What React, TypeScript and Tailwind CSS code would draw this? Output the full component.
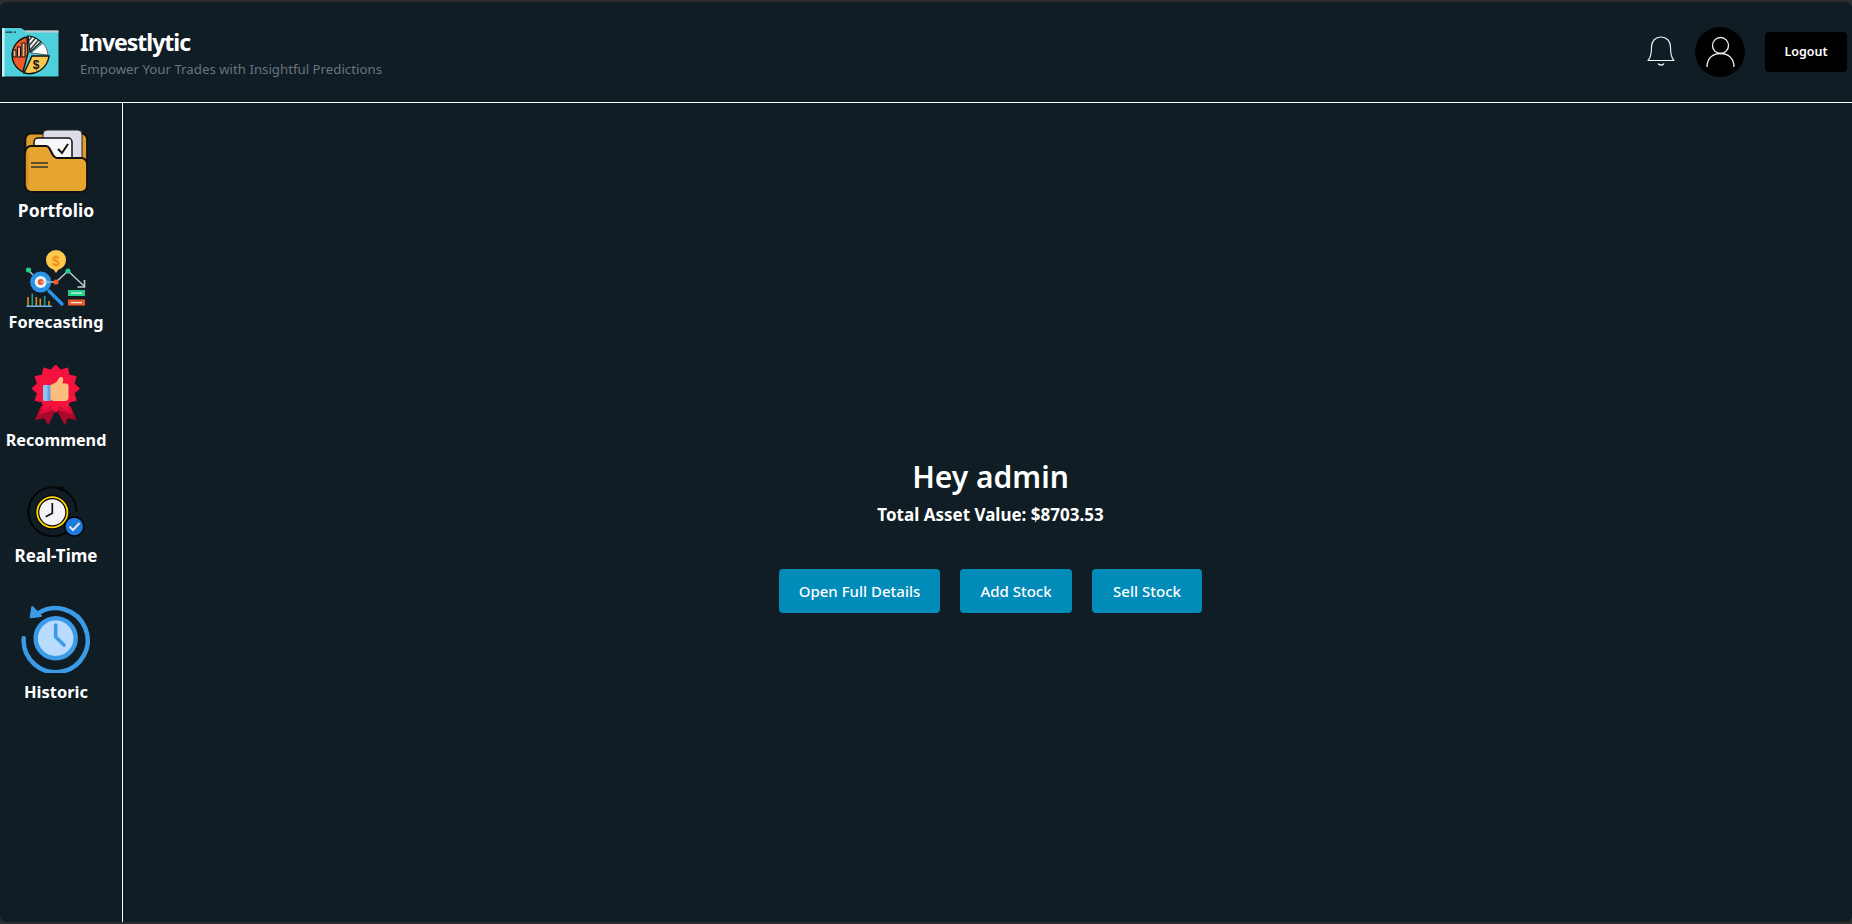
function starPoints(cx: number, cy: number, outer: number, inner: number, count: number) {
  const points: string[] = [];
  for (let i = 0; i < count * 2; i++) {
    const radius = i % 2 === 0 ? outer : inner;
    const angle = (Math.PI * i) / count - Math.PI / 2;
    points.push(`${cx + radius * Math.cos(angle)},${cy + radius * Math.sin(angle)}`);
  }
  return points.join(" ");
}

function LogoIcon() {
  return (
    <svg viewBox="0 0 60 52" className="h-[52px] w-[60px]">
      <defs>
        <clipPath id="hatch">
          <path d="M28 10 L30 26 L41 16 A20 20 0 0 0 28 10z" />
        </clipPath>
      </defs>
      <path d="M1.5 1.5 H21 L25 4 H58 a1 1 0 0 1 1 1 V50 a1 1 0 0 1 -1 1 H2.5 a1 1 0 0 1 -1 -1z" fill="#4dd0dc" stroke="#0b1215" strokeWidth="1" />
      <rect x="2" y="2" width="2.5" height="48.5" fill="#c5f1f5" />
      <rect x="25" y="4.5" width="33.5" height="2" fill="#c9c9c9" />
      <rect x="5.5" y="5.5" width="7" height="1.3" fill="#1d3a44" />
      <rect x="14" y="5.5" width="2" height="1.3" fill="#1d3a44" />
      <path d="M27 11 A18.5 18.5 0 0 0 23 46 L28 27z" fill="#ee5a2a" stroke="#111" strokeWidth="1.4" />
      <path d="M28 10 L30 26 L41 16 A20 20 0 0 0 28 10z" fill="#f2f2f2" stroke="#111" strokeWidth="1.2" />
      <g clipPath="url(#hatch)" stroke="#333" strokeWidth="1.4">
        <path d="M24 20 L36 6 M27 22 L39 8 M30 24 L42 10 M33 26 L45 12" />
      </g>
      <path d="M31 27 L43 17 A20 20 0 0 1 48 29z" fill="#fff" stroke="#111" strokeWidth="0.6" />
      <path d="M32 30 H49 A20 20 0 0 1 24 47z" fill="#f9c74f" stroke="#111" strokeWidth="1.4" />
      <rect x="13" y="24" width="3" height="7" fill="#f4b183" stroke="#111" strokeWidth="1" />
      <rect x="17.5" y="21" width="3" height="10" fill="#f4b183" stroke="#111" strokeWidth="1" />
      <rect x="22" y="17" width="3" height="14" fill="#f4b183" stroke="#111" strokeWidth="1" />
      <text x="36" y="43" fontSize="12" fontWeight="700" textAnchor="middle" fill="#111" fontFamily="Liberation Sans, sans-serif">$</text>
    </svg>
  );
}

function FolderIcon() {
  return (
    <svg viewBox="0 0 64 64" className="h-[64px] w-[64px]">
      <rect x="1.2" y="4.5" width="62" height="56" rx="6" fill="#dc9d2a" stroke="#111" strokeWidth="2.2" />
      <path d="M19 5 a4 4 0 0 1 4 -4 h31 a4 4 0 0 1 4 4 v28 h-39z" fill="#dcdce8" stroke="#222" strokeWidth="1" />
      <path d="M10 13 a4 4 0 0 1 4 -4 h30 a4 4 0 0 1 4 4 v20 h-38z" fill="#f7f7fa" stroke="#111" strokeWidth="1.5" />
      <path d="M34 20 l4 4 l6 -9" fill="none" stroke="#111" strokeWidth="2" />
      <path d="M1.2 23 a6 6 0 0 1 6 -6 h15 c5 0 5 12 11 12 h24 a6 6 0 0 1 6 6 v22 a6 6 0 0 1 -6 6 H7.2 a6 6 0 0 1 -6 -6z" fill="#e5a52f" stroke="#111" strokeWidth="2.2" />
      <path d="M7 34 h17 M7 38 h17" stroke="#333" strokeWidth="1.5" />
      <rect x="1.8" y="24" width="3" height="33" fill="#d8952a" />
    </svg>
  );
}

function ForecastIcon() {
  return (
    <svg viewBox="0 0 60 57" className="h-[57px] w-[60px]">
      <circle cx="30" cy="10" r="10" fill="#ffc94d" />
      <path d="M26.5 18 L30 23 L33.5 18z" fill="#ffc94d" />
      <text x="30" y="15.5" fontSize="14" fontWeight="700" textAnchor="middle" fill="#f28c1e" fontFamily="Liberation Sans, sans-serif">$</text>
      <path d="M2.3 20 L7 25 M20 32 H30 L42 21 L58 36" fill="none" stroke="#c3cbcf" strokeWidth="1.3" />
      <path d="M58.5 30 V37 H51.5" fill="none" stroke="#c3cbcf" strokeWidth="1.6" />
      <circle cx="2.5" cy="20" r="2.6" fill="#1fd286" />
      <circle cx="42" cy="21" r="2.6" fill="#1fd286" />
      <circle cx="30" cy="32" r="2.6" fill="#ee5a2a" />
      <path d="M23 41 L36 54" stroke="#2b93e6" strokeWidth="3.4" strokeLinecap="round" />
      <circle cx="14.7" cy="32" r="10.5" fill="#2b93e6" />
      <circle cx="14.7" cy="32" r="6" fill="#e8f2f8" />
      <circle cx="14.7" cy="32" r="3" fill="#ee5a2a" />
      <path d="M14.7 32 H24" stroke="#c3cbcf" strokeWidth="1.2" />
      <rect x="42" y="40" width="17" height="6" fill="#1fd286" />
      <rect x="45" y="42.5" width="11" height="1.2" fill="#e8f2f8" />
      <rect x="42" y="49.5" width="17" height="6" fill="#ee5a2a" />
      <rect x="45" y="52" width="11" height="1.2" fill="#e8f2f8" />
      <path d="M2 47 v9 M10.3 47 v9 M14.3 48.5 v7.5 M23 51 v5" stroke="#e08a22" strokeWidth="1.6" />
      <path d="M6.3 43.5 v12.5 M18.7 46 v10" stroke="#1f9f80" strokeWidth="1.6" />
      <rect x="0.3" y="55.5" width="25.5" height="1.5" fill="#6fb4e8" />
    </svg>
  );
}

function BadgeIcon() {
  return (
    <svg viewBox="0 0 48 61" className="h-[61px] w-[48px]">
      <path d="M8.7 41 L3 55 L12 53.3 L16.3 60.5 L24 44z" fill="#a90a2b" />
      <path d="M38.7 41 L44.5 55 L35.3 53.3 L33 60.5 L24 44z" fill="#a90a2b" />
      <path d="M10 41 L7 50 L24 44z M38 41 L41 50 L24 44z" fill="#dd0d35" />
      <polygon points={starPoints(23.7, 23.5, 23.8, 19, 12)} fill="#f4123f" stroke="#f4123f" strokeWidth="1" strokeLinejoin="round" />
      <rect x="11" y="20" width="7.5" height="16" rx="1" fill="#8ec5f0" />
      <rect x="15.5" y="20" width="3" height="16" fill="#5fa3de" />
      <path d="M18.5 20 L24 17.5 L27.5 12.5 C31 11 32 14 30.5 18.5 H34 C36.5 18.5 36.7 21 36.5 22 V32.5 C36.5 35 35 36 33 36 H22 C20 36 18.5 35 18.5 33z" fill="#fdbd7e" />
    </svg>
  );
}

function RealTimeIcon() {
  return (
    <svg viewBox="0 0 60 51" className="h-[51px] w-[60px]">
      <path d="M33 2 A24.5 24.5 0 1 0 46 41 M33 2 A24.5 24.5 0 0 1 50.5 26" fill="none" stroke="#060606" strokeWidth="2" />
      <path d="M37 -0.5 L31 2.5 L37 6z" fill="#060606" />
      <circle cx="26.3" cy="26.3" r="16.6" fill="#ffd400" stroke="#060606" strokeWidth="1.2" />
      <circle cx="26.3" cy="26.3" r="13.6" fill="#f2f4f7" stroke="#060606" strokeWidth="1.2" />
      <path d="M26.3 17 V27.3 L19.7 30.7" fill="none" stroke="#111" strokeWidth="1.7" />
      <circle cx="48.3" cy="40.5" r="9.5" fill="#1f7ae0" stroke="#060606" strokeWidth="1.6" />
      <path d="M43.5 40.5 l3.5 3.5 l6.5 -7" fill="none" stroke="#e6e8ea" strokeWidth="2" />
    </svg>
  );
}

function HistoricIcon() {
  return (
    <svg viewBox="0 0 70 70" className="h-[70px] w-[70px]">
      <path d="M16.3 11 A32 32 0 1 1 2.7 35.3" fill="none" stroke="#3c9be6" strokeWidth="4.5" strokeLinecap="round" />
      <path d="M11.3 4 L9.7 14.3 L20 13z" fill="#3c9be6" stroke="#3c9be6" strokeWidth="2" strokeLinejoin="round" />
      <circle cx="34.7" cy="35.3" r="20" fill="#b9dbff" stroke="#3c9be6" strokeWidth="4.5" />
      <path d="M34.7 22 V34 L43 42" fill="none" stroke="#3c9be6" strokeWidth="3.6" strokeLinecap="round" strokeLinejoin="round" />
    </svg>
  );
}

function BellIcon() {
  return (
    <svg viewBox="0 0 28 32" className="h-[32px] w-[28px]" fill="none" stroke="#f3f4f6" strokeWidth="1.1">
      <path d="M1 24.5 C4.5 21 4.5 15 4.5 11 C4.5 5 8.5 1 14 1 C19.5 1 23.5 5 23.5 11 C23.5 15 23.5 21 27 24.5z" strokeLinejoin="round" />
      <path d="M11 27.5 C12 29.5 16 29.5 17 27.5" strokeWidth="1.4" />
    </svg>
  );
}

function UserIcon() {
  return (
    <svg viewBox="0 0 50 50" className="h-[50px] w-[50px]">
      <circle cx="25.5" cy="18.5" r="8" fill="none" stroke="#f3f4f6" strokeWidth="1.3" />
      <path d="M12 40 C12 31 18 26.5 25.5 26.5 C33 26.5 39 31 39 40" fill="none" stroke="#f3f4f6" strokeWidth="1.3" />
    </svg>
  );
}

const navItems = [
  { label: "Portfolio", icon: <FolderIcon />, gap: "mt-[26px]", labelClass: "mt-[5px] text-[17.5px]" },
  { label: "Forecasting", icon: <ForecastIcon />, gap: "mt-[28px]", labelClass: "mt-[3px] text-[16.3px]" },
  { label: "Recommend", icon: <BadgeIcon />, gap: "mt-[31px]", labelClass: "mt-[2px] text-[16.2px]" },
  { label: "Real-Time", icon: <RealTimeIcon />, gap: "mt-[34px]", labelClass: "mt-[7px] text-[17px]" },
  { label: "Historic", icon: <HistoricIcon />, gap: "mt-[35px]", labelClass: "mt-[7px] text-[16.5px]" },
];

const buttonClass = "h-[44px] rounded-[4px] bg-[#008bb9] text-[15px] font-medium";

export default function App() {
  return (
    <div className="h-[924px] w-full overflow-hidden bg-[#2e2e2e] py-[2px]">
      <div
        className="flex h-full flex-col rounded-[6px] bg-[#101d25] text-white"
        style={{ fontFamily: '"Noto Sans", sans-serif' }}
      >
        <header className="flex h-[101px] shrink-0 items-center justify-between border-b border-white pr-[5px]">
          <div className="flex items-center gap-[20px]">
            <LogoIcon />
            <div className="flex flex-col">
              <span className="text-[23px] leading-[32px] font-bold tracking-[-1px]">Investlytic</span>
              <span className="text-[13.25px] leading-[20px] text-[#6b7280] pt-[1px]">Empower Your Trades with Insightful Predictions</span>
            </div>
          </div>
          <div className="flex items-center">
            <BellIcon />
            <div className="ml-[20px] flex h-[50px] w-[50px] items-center justify-center rounded-full bg-black">
              <UserIcon />
            </div>
            <button className="ml-[20px] flex h-[40px] w-[82px] items-center justify-center rounded-[4px] bg-black text-[12.5px] font-semibold">Logout</button>
          </div>
        </header>
        <div className="flex flex-1">
          <aside className="flex w-[123px] shrink-0 flex-col items-center border-r border-white pr-[10px]">
            {navItems.map((item) => (
              <div key={item.label} className={`flex flex-col items-center ${item.gap}`}>
                {item.icon}
                <span className={`leading-[24px] font-bold whitespace-nowrap ${item.labelClass}`}>{item.label}</span>
              </div>
            ))}
          </aside>
          <main className="flex flex-1 flex-col items-center pt-[356px] pl-[6px]">
            <h1 className="text-[30px] leading-[36px] font-semibold">Hey admin</h1>
            <p className="mt-[8px] text-[17px] leading-[24px] font-bold">Total Asset Value: $8703.53</p>
            <div className="mt-[42px] flex gap-[20px]">
              <button className={`w-[161px] ${buttonClass}`}>Open Full Details</button>
              <button className={`w-[112px] ${buttonClass}`}>Add Stock</button>
              <button className={`w-[110px] ${buttonClass}`}>Sell Stock</button>
            </div>
          </main>
        </div>
      </div>
    </div>
  );
}
